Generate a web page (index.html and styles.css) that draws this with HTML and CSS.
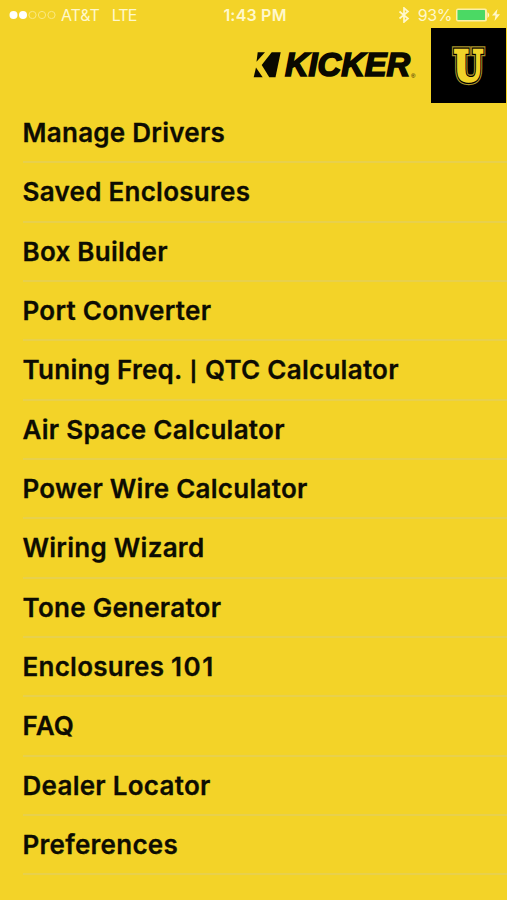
FILE: index.html
```html
<!DOCTYPE html>
<html lang="en">
<head>
  <meta charset="UTF-8">
  <title>Kicker U</title>
  <link rel="stylesheet" href="styles.css">
</head>
<body>

<div class="status">
  <div class="carrier">
    <svg class="signal" width="47" height="10" viewBox="0 0 47 10">
      <circle cx="4.5" cy="5" r="4" fill="#fff"/>
      <circle cx="14" cy="5" r="4" fill="#fff"/>
      <circle cx="23.5" cy="5" r="3.6" class="ring"/>
      <circle cx="33" cy="5" r="3.6" class="ring"/>
      <circle cx="42.5" cy="5" r="3.6" class="ring"/>
    </svg>
    <span class="name">AT&amp;T</span>
    <span class="network">LTE</span>
  </div>
  <div class="time">1:43 PM</div>
  <div class="power">
    <svg class="bluetooth" width="12" height="16" viewBox="0 0 12 16">
      <path d="M1.5 4.5 L10 11.5 L6 15 V1 L10 4.5 L1.5 11.5"/>
    </svg>
    <span class="percent">93%</span>
    <svg class="battery" width="45" height="14" viewBox="0 0 45 14">
      <rect x="0" y="0.5" width="31" height="13" rx="2" fill="#fbf0a8"/>
      <rect x="1.5" y="2" width="27.5" height="10" rx="0.5" fill="#4bd964"/>
      <path d="M31.5 4 Q35 7 31.5 10 Z" fill="#fff8cc"/>
      <path d="M41.5 1 L36 7.5 H39.5 L38.5 13 L44 6.3 H40.5 Z" fill="#fff8cc"/>
    </svg>
  </div>
</div>

<header class="brand">
  <svg class="kicker" width="168" height="40" viewBox="0 0 168 40">
    <path d="M4.7 3.3 H12 L3.5 12.7 Z"/>
    <path d="M3 18.5 L0.7 28.3 H9.7 Z"/>
    <path d="M18.7 3.3 H27.7 L22.5 28.3 H16.3 L8.7 16 Z"/>
    <text x="32" y="27.4" textLength="125" lengthAdjust="spacingAndGlyphs" class="word">KICKER</text>
    <text x="158" y="29" class="reg">®</text>
  </svg>
  <div class="badge">
    <svg width="75" height="75" viewBox="0 0 75 75">
      <g transform="translate(37.5 53.3) scale(0.8 1)">
        <text class="u outer">U</text>
        <text class="u gap">U</text>
        <text class="u inner">U</text>
      </g>
    </svg>
  </div>
</header>

<ul class="menu">
  <li>Manage Drivers</li>
  <li>Saved Enclosures</li>
  <li>Box Builder</li>
  <li>Port Converter</li>
  <li>Tuning Freq. <span class="pipe">|</span> QTC Calculator</li>
  <li>Air Space Calculator</li>
  <li>Power Wire Calculator</li>
  <li>Wiring Wizard</li>
  <li>Tone Generator</li>
  <li>Enclosures <span class="number">101</span></li>
  <li>FAQ</li>
  <li>Dealer Locator</li>
  <li>Preferences</li>
</ul>

</body>
</html>
```
FILE: styles.css
```css
body {
  margin: 0;
  background: #f3d328;
  color: #0d0c02;
  font-family: Inter, "Liberation Sans", sans-serif;
}

.status {
  display: grid;
  grid-template-columns: 1fr auto 1fr;
  align-items: center;
  height: 28px;
  padding: 1px 6px 0 9px;
  box-sizing: border-box;
  color: #fff8cc;
  font-size: 16px;
}

.carrier,
.power {
  display: flex;
  align-items: center;
}

.name {
  margin-left: 5px;
  letter-spacing: -0.1px;
}

.network {
  margin-left: 12px;
  letter-spacing: -1px;
}

.ring {
  fill: none;
  stroke: #fae982;
  stroke-width: 1;
}

.time {
  font-weight: 600;
  letter-spacing: 0.2px;
}

.power {
  justify-content: flex-end;
}

.bluetooth {
  fill: none;
  stroke: #fff8cc;
  stroke-width: 1.7;
}

.percent {
  margin: 0 4px 0 8px;
  letter-spacing: -0.4px;
}

.brand {
  display: flex;
  justify-content: flex-end;
  height: 75px;
  padding-right: 1px;
}

.kicker {
  margin: 21px 10px 0 0;
  fill: #0a0900;
  overflow: visible;
}

.word {
  font: italic bold 33.5px "Liberation Sans", sans-serif;
  stroke: #0a0900;
  stroke-width: 1.7;
}

.reg {
  font: 6px "Liberation Sans", sans-serif;
}

.badge {
  width: 75px;
  height: 75px;
  background: #000;
}

.u {
  font: bold 42px "DejaVu Serif", serif;
  text-anchor: middle;
  fill: #f0d32a;
  stroke: #f0d32a;
  stroke-width: 2.4;
}

.outer {
  stroke: #a8922a;
  stroke-width: 7.4;
}

.gap {
  stroke: #000;
  stroke-width: 4.8;
}

.menu {
  list-style: none;
  margin: 0;
  padding: 1px 0 0 22.5px;
}

.menu li {
  height: 59.33px;
  box-sizing: border-box;
  border-bottom: 2px solid #e8d04c;
  font-size: 26px;
  font-weight: 600;
  line-height: 57.5px;
  letter-spacing: 0.27px;
  -webkit-text-stroke: 0.3px #0d0c02;
}

.number {
  letter-spacing: 1.5px;
}

.pipe {
  display: inline-block;
  font-size: 19px;
  line-height: 20px;
  padding: 0 1px;
  vertical-align: 1px;
  -webkit-text-stroke: 0.8px #0d0c02;
}
```
